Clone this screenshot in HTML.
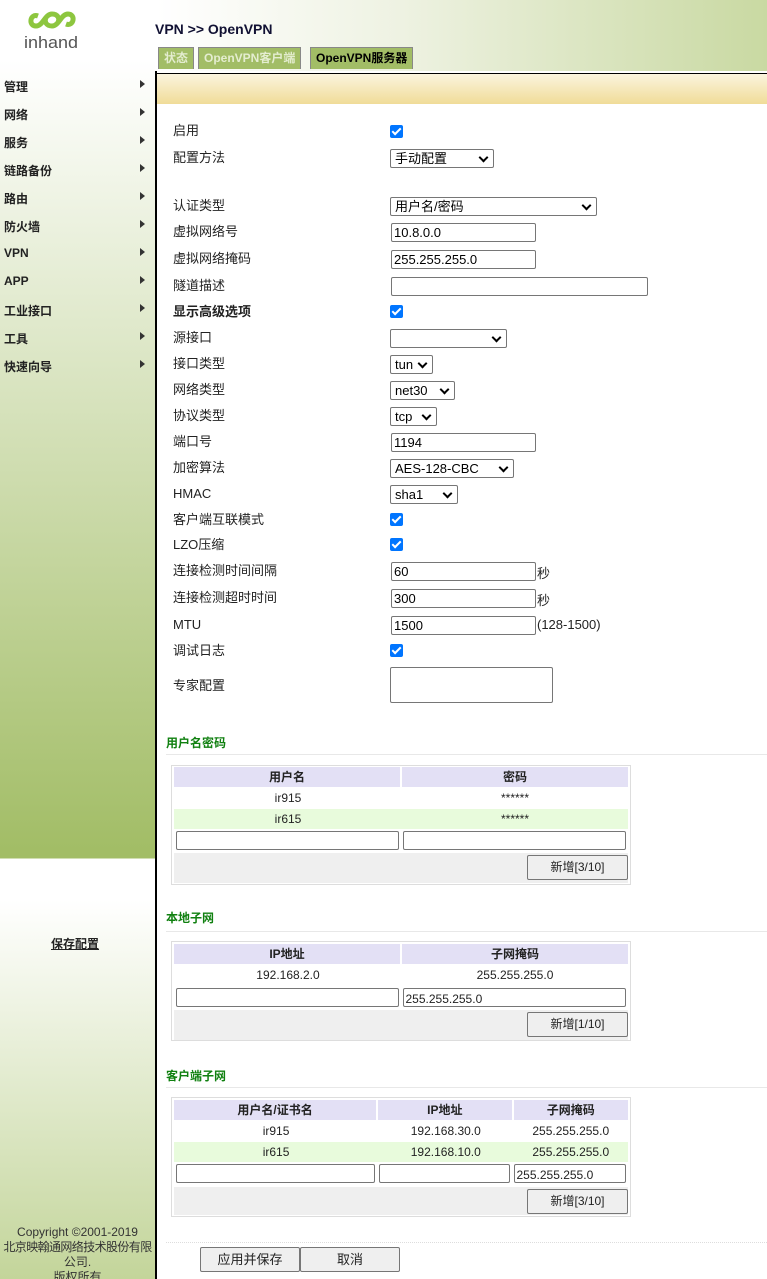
<!DOCTYPE html>
<html><head><meta charset="utf-8"><style>
*{margin:0;padding:0;box-sizing:border-box}
html{width:767px;height:1279px;overflow:hidden}
body{width:767px;height:1279px;position:relative;overflow:hidden;font-family:"Liberation Sans","Noto Sans CJK SC",sans-serif;font-size:13px;color:#222;background:#fff}
.a{position:absolute}
#side{left:0;top:0;width:155px;height:1279px;background:linear-gradient(#fff 0,#fff 60px,#a2bd66 850px,#a2bd66 858px,#fff 859px,#fff 900px,#c3d59a 1279px)}
#vline{left:155px;top:71px;width:2px;height:1208px;background:#000}
#head{left:157px;top:0;width:610px;height:71px;background:linear-gradient(90deg,#fff 0,#eef2e2 40%,#c9d9a2 100%)}
.m{position:absolute;left:4px;font-weight:bold;font-size:12px;color:#222}
.ar{position:absolute;left:140px;width:0;height:0;border-left:5px solid #333;border-top:4px solid transparent;border-bottom:4px solid transparent}
.tab{position:absolute;top:47px;height:22px;background:#a2bd66;border:1px solid #888;border-bottom:none;font-weight:bold;font-size:12px;line-height:21px;padding:0 5px;color:#e4edd0}
#bar{left:157px;top:73px;width:610px;height:31px;background:linear-gradient(#fbf4de,#f0dc98);border-top:1px solid #000}
.l{position:absolute;left:173px;font-size:13px;line-height:16px}
.sel{position:absolute;left:390px;height:19px;border:1px solid #767676;border-radius:2px;background:#fff;font-size:13px;line-height:17px;padding-left:4px;color:#000}
.sel:after{content:"";position:absolute;right:6px;top:4px;width:5px;height:5px;border-right:2px solid #000;border-bottom:2px solid #000;transform:rotate(45deg)}
.in{position:absolute;left:391px;width:145px;height:19px;border:1px solid #767676;border-radius:2px;background:#fff;font-size:13px;line-height:17px;padding-left:2px;color:#000}
.cb{position:absolute;left:390px;width:13px;height:13px;background:#0075ff;border-radius:2px}
.cb:after{content:"";position:absolute;left:4px;top:1px;width:3px;height:7px;border-right:2px solid #fff;border-bottom:2px solid #fff;transform:rotate(45deg)}
.st{position:absolute;left:166px;font-weight:bold;font-size:12px;color:#108010}
.hr{position:absolute;left:166px;width:601px;height:1px;background:#e8e8e8}
.tb{position:absolute;left:171px;width:460px;border:1px solid #ddd;background:#fff}
.row{position:absolute;left:2px;right:2px;display:flex}
.row div{text-align:center;font-size:12px;line-height:20px}
.hd div{background:#e3e0f5;font-weight:bold;margin-right:2px}
.g div{background:#e8fbdc}
.ti{height:19px;border:1px solid #767676;border-radius:2px;background:#fff;margin:1px 2px;font-size:12px;line-height:17px;text-align:left!important;padding-left:2px}
.bt{position:absolute;height:25px;border:1px solid #767676;border-radius:2px;background:#efefef;font-size:12px;line-height:23px;text-align:center}
</style></head><body>
<div id="side" class="a"></div>
<div id="head" class="a"></div>
<div id="vline" class="a"></div>
<svg class="a" style="left:24px;top:10px" width="56" height="46" viewBox="0 0 56 46">
<path d="M14 6 C6 3 4 16 12 16 C19 16 21 4 28 4 C34 4 36 9 34 12" fill="none" stroke="#8dc63f" stroke-width="5"/>
<path d="M42 14 C50 17 52 4 44 4 C37 4 35 16 28 16 C22 16 20 11 22 8" fill="none" stroke="#8dc63f" stroke-width="5"/>
<text x="0" y="38" font-family="Liberation Sans,sans-serif" font-size="17" fill="#555" textLength="54" lengthAdjust="spacingAndGlyphs">inhand</text>
</svg>
<div class="a" style="left:155px;top:21px;font-weight:bold;font-size:14px;color:#113">VPN &gt;&gt; OpenVPN</div>
<div class="tab" style="left:158px">状态</div>
<div class="tab" style="left:198px">OpenVPN客户端</div>
<div class="tab" style="left:310px;color:#000">OpenVPN服务器</div>
<div id="bar" class="a"></div>
<div class="m" style="top:78px">管理</div><div class="ar" style="top:80px"></div>
<div class="m" style="top:106px">网络</div><div class="ar" style="top:108px"></div>
<div class="m" style="top:134px">服务</div><div class="ar" style="top:136px"></div>
<div class="m" style="top:162px">链路备份</div><div class="ar" style="top:164px"></div>
<div class="m" style="top:190px">路由</div><div class="ar" style="top:192px"></div>
<div class="m" style="top:218px">防火墙</div><div class="ar" style="top:220px"></div>
<div class="m" style="top:246px">VPN</div><div class="ar" style="top:248px"></div>
<div class="m" style="top:274px">APP</div><div class="ar" style="top:276px"></div>
<div class="m" style="top:302px">工业接口</div><div class="ar" style="top:304px"></div>
<div class="m" style="top:330px">工具</div><div class="ar" style="top:332px"></div>
<div class="m" style="top:358px">快速向导</div><div class="ar" style="top:360px"></div>
<div class="a" style="left:51px;top:935px;font-weight:bold;font-size:12px;text-decoration:underline">保存配置</div>
<div class="a" style="left:-6px;top:1225px;width:167px;text-align:center;font-size:12px;line-height:15px;color:#333;white-space:nowrap">Copyright ©2001-2019<br><span style="letter-spacing:-0.6px">北京映翰通网络技术股份有限</span><br>公司.<br>版权所有</div>

<div class="l" style="top:123px">启用</div><div class="cb" style="top:125px"></div>
<div class="l" style="top:150px">配置方法</div><div class="sel" style="top:149px;width:104px">手动配置</div>
<div class="l" style="top:198px">认证类型</div><div class="sel" style="top:197px;width:207px">用户名/密码</div>
<div class="l" style="top:224px">虚拟网络号</div><div class="in" style="top:223px">10.8.0.0</div>
<div class="l" style="top:251px">虚拟网络掩码</div><div class="in" style="top:250px">255.255.255.0</div>
<div class="l" style="top:278px">隧道描述</div><div class="in" style="top:277px;width:257px"></div>
<div class="l" style="top:304px;font-weight:bold">显示高级选项</div><div class="cb" style="top:305px"></div>
<div class="l" style="top:330px">源接口</div><div class="sel" style="top:329px;width:117px"></div>
<div class="l" style="top:356px">接口类型</div><div class="sel" style="top:355px;width:43px">tun</div>
<div class="l" style="top:382px">网络类型</div><div class="sel" style="top:381px;width:65px">net30</div>
<div class="l" style="top:408px">协议类型</div><div class="sel" style="top:407px;width:47px">tcp</div>
<div class="l" style="top:434px">端口号</div><div class="in" style="top:433px">1194</div>
<div class="l" style="top:460px">加密算法</div><div class="sel" style="top:459px;width:124px">AES-128-CBC</div>
<div class="l" style="top:486px">HMAC</div><div class="sel" style="top:485px;width:68px">sha1</div>
<div class="l" style="top:512px">客户端互联模式</div><div class="cb" style="top:513px"></div>
<div class="l" style="top:537px">LZO压缩</div><div class="cb" style="top:538px"></div>
<div class="l" style="top:563px">连接检测时间间隔</div><div class="in" style="top:562px">60</div><div class="a" style="left:537px;top:563px">秒</div>
<div class="l" style="top:590px">连接检测超时时间</div><div class="in" style="top:589px">300</div><div class="a" style="left:537px;top:590px">秒</div>
<div class="l" style="top:617px">MTU</div><div class="in" style="top:616px">1500</div><div class="a" style="left:537px;top:617px;font-size:13px">(128-1500)</div>
<div class="l" style="top:643px">调试日志</div><div class="cb" style="top:644px"></div>
<div class="l" style="top:678px">专家配置</div><div class="in" style="top:667px;left:390px;width:163px;height:36px"></div>

<div class="st" style="top:734px">用户名密码</div><div class="hr" style="top:754px"></div>
<div class="tb" style="top:765px;height:120px">
<div class="row hd" style="top:1px"><div style="width:227px">用户名</div><div style="width:227px;margin-right:0">密码</div></div>
<div class="row" style="top:22px"><div style="width:229px">ir915</div><div style="width:227px">******</div></div>
<div class="row g" style="top:43px"><div style="width:229px">ir615</div><div style="width:227px">******</div></div>
<div class="row" style="top:64px"><div class="ti" style="width:223px"></div><div class="ti" style="width:224px"></div></div>
<div class="a" style="left:2px;right:2px;top:87px;height:30px;background:#efefef"></div>
<div class="bt" style="left:355px;top:89px;width:101px">新增[3/10]</div>
</div>

<div class="st" style="top:909px">本地子网</div><div class="hr" style="top:931px"></div>
<div class="tb" style="top:941px;height:100px">
<div class="row hd" style="top:2px"><div style="width:227px">IP地址</div><div style="width:227px;margin-right:0">子网掩码</div></div>
<div class="row" style="top:23px"><div style="width:229px">192.168.2.0</div><div style="width:227px">255.255.255.0</div></div>
<div class="row" style="top:45px"><div class="ti" style="width:223px"></div><div class="ti" style="width:224px">255.255.255.0</div></div>
<div class="a" style="left:2px;right:2px;top:68px;height:30px;background:#efefef"></div>
<div class="bt" style="left:355px;top:70px;width:101px">新增[1/10]</div>
</div>

<div class="st" style="top:1067px">客户端子网</div><div class="hr" style="top:1087px"></div>
<div class="tb" style="top:1097px;height:120px">
<div class="row hd" style="top:2px"><div style="width:203px">用户名/证书名</div><div style="width:134px">IP地址</div><div style="width:115px;margin-right:0">子网掩码</div></div>
<div class="row" style="top:23px"><div style="width:205px">ir915</div><div style="width:136px">192.168.30.0</div><div style="width:115px">255.255.255.0</div></div>
<div class="row g" style="top:44px"><div style="width:205px">ir615</div><div style="width:136px">192.168.10.0</div><div style="width:115px">255.255.255.0</div></div>
<div class="row" style="top:65px"><div class="ti" style="width:200px"></div><div class="ti" style="width:131px"></div><div class="ti" style="width:113px">255.255.255.0</div></div>
<div class="a" style="left:2px;right:2px;top:89px;height:28px;background:#efefef"></div>
<div class="bt" style="left:355px;top:91px;width:101px">新增[3/10]</div>
</div>

<div class="a" style="left:166px;top:1242px;width:601px;border-top:1px dotted #ddd"></div>
<div class="bt" style="left:200px;top:1247px;width:100px;font-size:13px">应用并保存</div>
<div class="bt" style="left:300px;top:1247px;width:100px;font-size:13px">取消</div>
</body></html>
